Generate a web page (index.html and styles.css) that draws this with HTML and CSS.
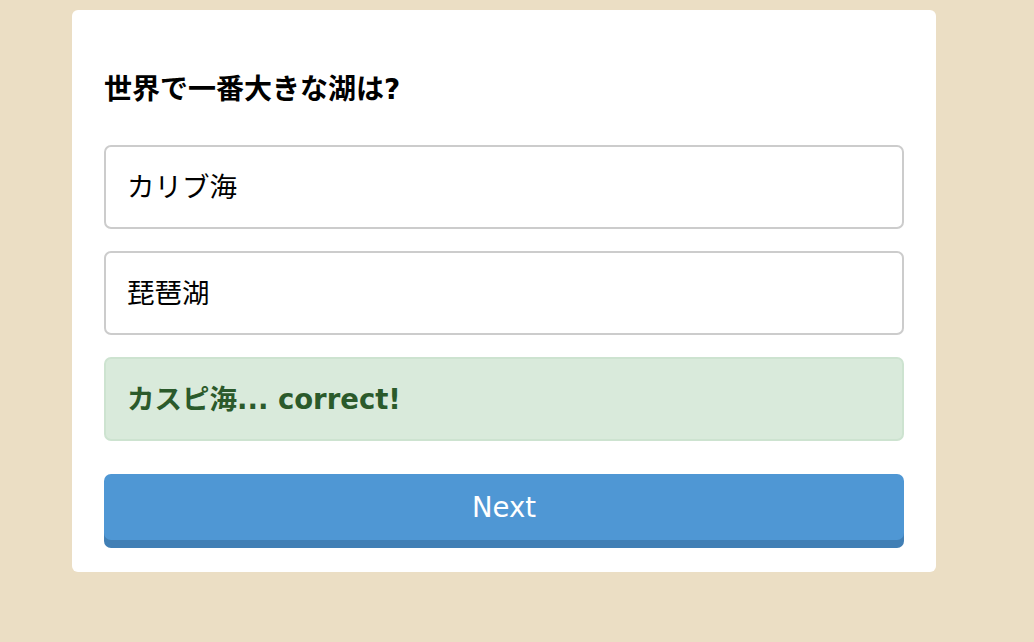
FILE: index.html
```html
<!DOCTYPE html>
<html lang="ja">
<head>
<meta charset="utf-8">
<title>Quiz</title>
<link rel="stylesheet" href="styles.css">
</head>
<body>
<div class="page">
  <div class="card">
    <h2 class="question">世界で一番大きな湖は?</h2>
    <div class="options">
      <div class="option">カリブ海</div>
      <div class="option">琵琶湖</div>
      <div class="option correct">カスピ海... correct!</div>
    </div>
    <button class="next">Next</button>
  </div>
</div>
</body>
</html>
```
FILE: styles.css
```css
html, body {
  margin: 0;
  padding: 0;
}
body {
  background: #ebdec4;
  font-family: "DejaVu Sans", "Noto Sans CJK JP", sans-serif;
  color: #000;
}
.page {
  padding: 10px 98px 0 72px;
}
.card {
  width: 864px;
  box-sizing: border-box;
  background: #fff;
  border-radius: 6px;
  padding: 32px;
}
.question {
  margin: 33px 0 40px;
  font-size: 28px;
  line-height: 30px;
  font-weight: bold;
}
.options {
  display: flex;
  flex-direction: column;
  gap: 22px;
}
.option {
  border: 2px solid #cccccc;
  border-radius: 7px;
  padding: 25px 21px;
  font-size: 27.5px;
  line-height: 30px;
}
.option.correct {
  background: #d9eadb;
  border-color: #cde3d0;
  color: #2b5a2b;
  font-weight: bold;
}
.next {
  display: block;
  width: 100%;
  height: 66px;
  margin-top: 33px;
  border: none;
  border-radius: 7px;
  background: #4f97d4;
  box-shadow: 0 8px 0 #417fb5;
  color: #fff;
  font-family: "DejaVu Sans", sans-serif;
  font-size: 27.5px;
  cursor: pointer;
}
```
